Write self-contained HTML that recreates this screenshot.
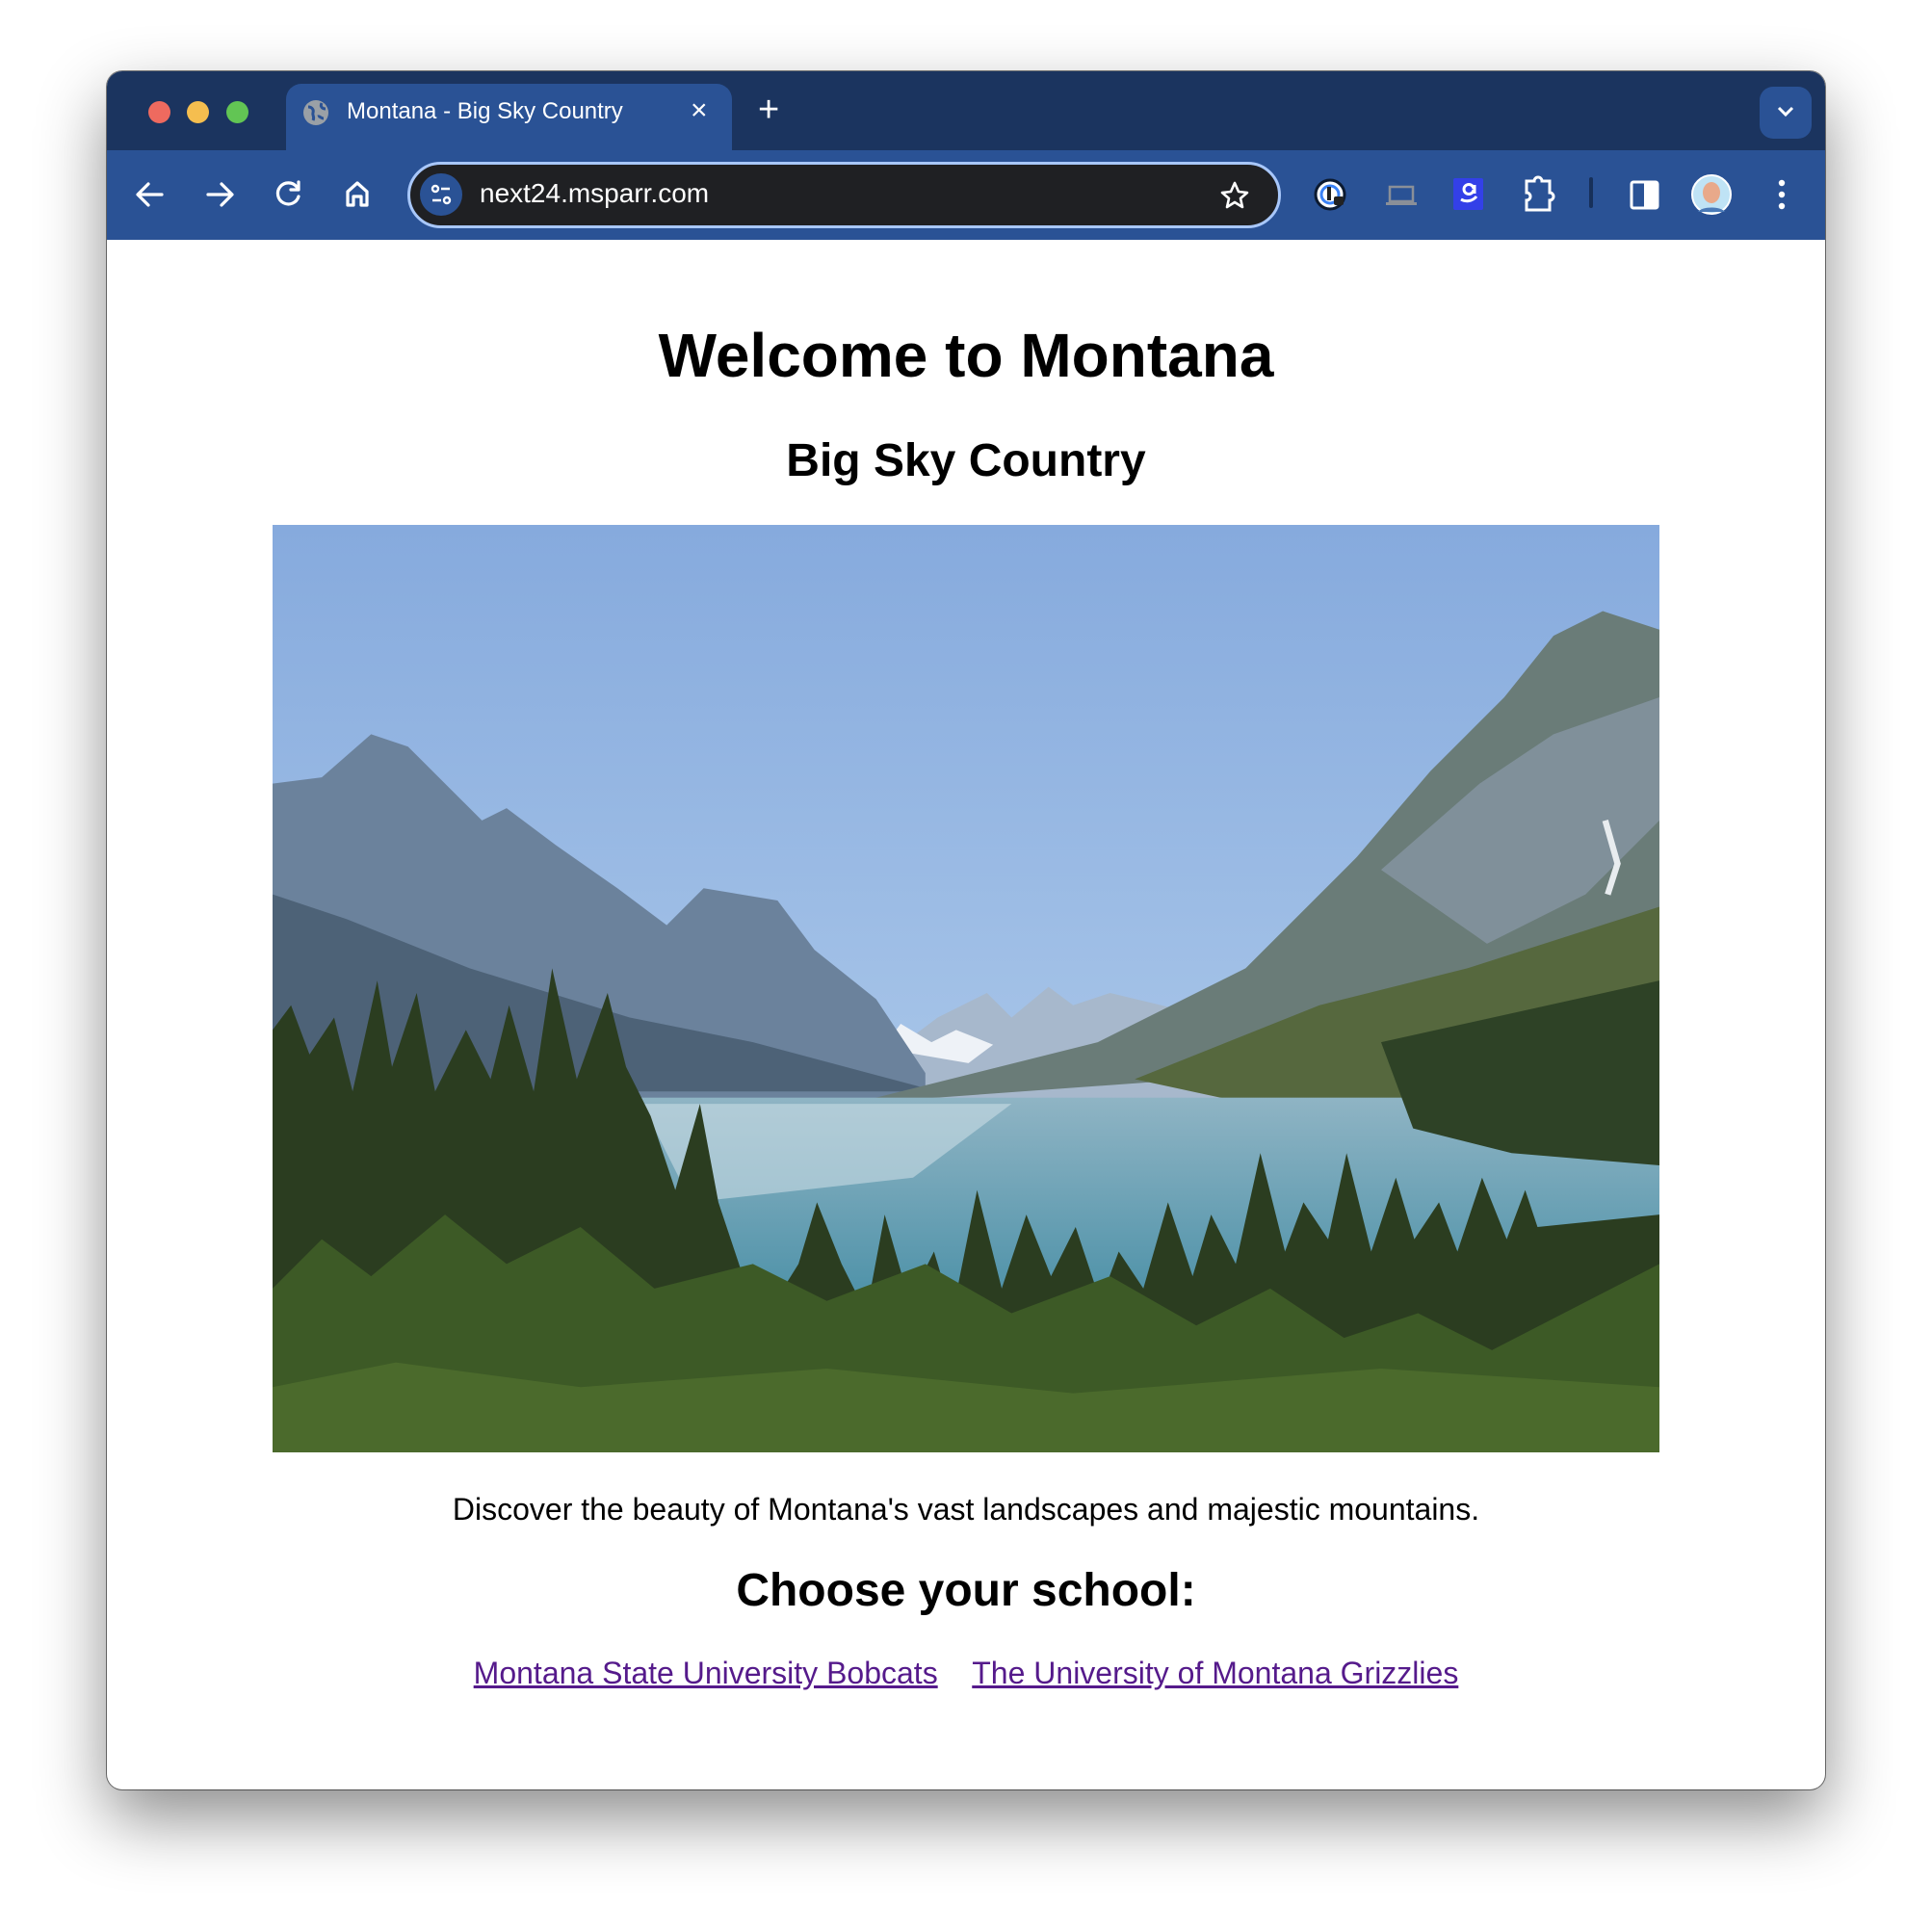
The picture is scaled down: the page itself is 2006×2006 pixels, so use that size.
<!DOCTYPE html>
<html><head><meta charset="utf-8">
<style>
*{margin:0;padding:0;box-sizing:border-box}
body{width:2006px;height:2006px;background:#fff;position:relative;overflow:hidden;font-family:"Liberation Sans",Arial,sans-serif}
.win{position:absolute;left:111px;top:74px;width:1784px;height:1784px;border-radius:16px;background:#fff;overflow:hidden;box-shadow:0 30px 70px rgba(0,0,0,.45),0 0 0 1px rgba(0,0,0,.5)}
.strip{position:absolute;left:0;top:0;width:100%;height:82px;background:#1b345f}
.tool{position:absolute;left:0;top:82px;width:100%;height:93px;background:#2a5295}
.dot{position:absolute;top:31px;width:23px;height:23px;border-radius:50%}
.tab{position:absolute;left:186px;top:13px;width:463px;height:70px;background:#2a5295;border-radius:16px 16px 0 0}
.t{position:absolute;color:#fff;white-space:nowrap}
.c{position:absolute;left:0;width:100%;text-align:center;color:#000;white-space:nowrap}
a{color:#551a8b}
</style></head><body>
<div class="win">
 <div class="strip"></div>
 <div class="tab"></div>
 <div class="dot" style="left:43px;background:#ee6a5f"></div>
 <div class="dot" style="left:83px;background:#f5be4f"></div>
 <div class="dot" style="left:124px;background:#62c554"></div>
 <svg style="position:absolute;left:203px;top:29px" width="28" height="28" viewBox="0 0 28 28"><circle cx="14" cy="14" r="13" fill="#9aa0a6"/><path d="M6 8c4 0 6 3 5 6s2 4 0 8M20 4c-2 4 1 6 4 6M22 20c-3 0-4-3-6-2" stroke="#2a5295" stroke-width="3" fill="none"/></svg>
 <div class="t" style="left:249px;top:28px;font-size:24px">Montana - Big Sky Country</div>
 <div class="t" style="left:606px;top:24px;font-size:30px">×</div>
 <div class="t" style="left:676px;top:19px;font-size:38px;font-weight:300">+</div>
 <div style="position:absolute;left:1716px;top:16px;width:54px;height:54px;border-radius:14px;background:#2a5295"></div>
 <svg style="position:absolute;left:1733px;top:34px" width="20" height="16"><path d="M3 4l7 7 7-7" stroke="#fff" stroke-width="3" fill="none"/></svg>
 <div class="tool"></div>
 <svg style="position:absolute;left:0;top:82px" width="1784" height="93" fill="none" stroke="#fff" stroke-width="3.2" stroke-linecap="round" stroke-linejoin="round">
  <path d="M33 46h24M43 35l-11 11 11 11"/>
  <path d="M105 46h24M119 35l11 11-11 11"/>
  <path d="M197 38a11 11 0 1 0 2 10M199 33v8h-8"/>
  <path d="M250 57V43l10-9 10 9v14h-6v-9h-8v9z"/>
 </svg>
 <div style="position:absolute;left:312px;top:94px;width:907px;height:69px;border-radius:35px;background:#1f2023;border:3px solid #a8c7fa"></div>
 <div style="position:absolute;left:325px;top:106px;width:44px;height:44px;border-radius:50%;background:#2a5295"></div>
 <svg style="position:absolute;left:325px;top:106px" width="44" height="44" fill="none" stroke="#fff" stroke-width="2.4"><circle cx="16" cy="16" r="3"/><path d="M22 16h9M13 28h9"/><circle cx="28" cy="28" r="3"/></svg>
 <div class="t" style="left:387px;top:111px;font-size:28px">next24.msparr.com</div>
 <svg style="position:absolute;left:1154px;top:112px" width="34" height="34"><path d="M17 4l4 9 9 1-7 6 2 9-8-5-8 5 2-9-7-6 9-1z" stroke="#fff" stroke-width="2.6" fill="none" stroke-linejoin="round"/></svg>
 <svg style="position:absolute;left:0;top:82px" width="1784" height="93">
  <circle cx="1270" cy="46" r="15" fill="#fff" stroke="#0c1a30" stroke-width="3"/><circle cx="1270" cy="46" r="9" fill="none" stroke="#3b82f6" stroke-width="3"/><rect x="1267" y="38" width="4" height="14" fill="#222"/><rect x="1274" y="48" width="10" height="9" rx="2" fill="#222"/>
  <rect x="1332" y="38" width="24" height="15" fill="none" stroke="#8a8f98" stroke-width="2.5"/><rect x="1328" y="54" width="32" height="3" fill="#8a8f98"/>
  <rect x="1398" y="29" width="31" height="33" rx="2" fill="#3340e8"/><path d="M1419 40a5 5 0 1 0 0 1M1420 36v9M1406 51c5 3 12 2 16-3" stroke="#fff" stroke-width="3" fill="none"/>
  <path d="M1474 32h8a4 4 0 0 1 8 0h8v12a4 4 0 0 1 0 8v10h-24v-10a4 4 0 0 0 0-8z" fill="none" stroke="#fff" stroke-width="3"/>
  <rect x="1539" y="28" width="4" height="32" rx="2" fill="#17305a"/>
  <rect x="1583" y="33" width="27" height="27" rx="2" fill="none" stroke="#fff" stroke-width="3"/><rect x="1596" y="33" width="14" height="27" fill="#fff"/>
  <circle cx="1666" cy="46" r="20" fill="#bfe3f5" stroke="#fff" stroke-width="2"/><ellipse cx="1666" cy="44" rx="9" ry="11" fill="#e8a98a"/><path d="M1652 64c4-6 24-6 28 0" fill="#4a7ab8"/>
  <circle cx="1739" cy="34" r="3.2" fill="#fff"/><circle cx="1739" cy="46" r="3.2" fill="#fff"/><circle cx="1739" cy="58" r="3.2" fill="#fff"/>
 </svg>
 <div class="c" style="top:258px;font-size:64px;font-weight:bold;line-height:74px">Welcome to Montana</div>
 <div class="c" style="top:377px;font-size:48px;font-weight:bold;line-height:56px">Big Sky Country</div>
 <svg style="position:absolute;left:172px;top:471px" width="1440" height="963" viewBox="0 0 1126 753" preserveAspectRatio="none">
  <defs>
   <linearGradient id="sky" x1="0" y1="0" x2="0" y2="1"><stop offset="0" stop-color="#86aadd"/><stop offset="1" stop-color="#bcd6f0"/></linearGradient>
   <linearGradient id="lake" x1="0" y1="0" x2="0" y2="1"><stop offset="0" stop-color="#8fb4c4"/><stop offset="1" stop-color="#3f8aa2"/></linearGradient>
  </defs>
  <rect width="1126" height="753" fill="url(#sky)"/>
  <path d="M480 470l20-40 40-30 40-20 20 20 30-25 20 15 30-10 50 12 60-10 60 10 30 10 0 70z" fill="#a7b8cc"/>
  <path d="M495 425l15-20 25 15 20-10 30 12-20 15z" fill="#eef2f7"/>
  <path d="M0 210l40-5 40-35 30 10 60 60 20-10 40 30 50 35 40 30 30-30 60 10 30 40 50 40 40 60 0 40H0z" fill="#6b829c"/>
  <path d="M0 300l60 20 100 40 130 40 100 20 150 40H0z" fill="#4d6277"/>
  <path d="M470 470l200-50 120-60 90-90 60-70 60-60 40-50 40-20 46 15v380l-150-10-160-10z" fill="#6a7c78"/>
  <path d="M900 280l80-70 60-40 86-30v100l-60 60-80 40z" fill="#80909a"/>
  <path d="M700 450l150-60 120-30 156-50v180l-240 0z" fill="#56683e"/>
  <path d="M1082 240l10 35-8 25" stroke="#e8ecef" stroke-width="5" fill="none"/>
  <rect x="0" y="465" width="1126" height="200" fill="url(#lake)"/>
  <path d="M300 470h300l-80 60-180 20z" fill="#c9dce4" opacity=".6"/>
  <path d="M900 420l226-50v150l-120-10-80-20z" fill="#2e4226"/>
  <path d="M0 753V410l15-20 15 40 20-30 15 60 20-90 12 70 20-60 15 80 25-50 20 40 15-60 20 70 15-100 20 90 25-70 15 60 20 40 20 60 20-70 15 80 20 60 20 30 25-40 15-50 20 50 20 40 15-80 20 70 20-40 15 50 20-100 20 80 20-60 20 50 20-40 20 60 15-40 20 30 20-70 20 60 15-50 20 40 20-90 20 80 15-40 20 30 15-70 20 80 20-60 15 50 20-30 15 40 20-60 20 50 15-40 10 30L1126 560V753z" fill="#2b3d20"/>
  <path d="M0 753V620l40-40 40 30 60-50 50 40 60-30 60 50 80-20 60 30 80-30 70 40 80-30 70 40 60-30 60 40 60-20 60 30L1126 600V753z" fill="#3d5a26"/>
  <path d="M0 753V700l100-20 150 20 200-15 200 20 250-20 226 15v53z" fill="#4b6a2c"/>
 </svg>
 <div class="c" style="top:1474px;font-size:32px;line-height:38px">Discover the beauty of Montana's vast landscapes and majestic mountains.</div>
 <div class="c" style="top:1550px;font-size:48px;font-weight:bold;line-height:56px">Choose your school:</div>
 <div class="c" style="top:1644px;font-size:32px;line-height:38px"><a href="#">Montana State University Bobcats</a>&nbsp;&nbsp;&nbsp;&nbsp;<a href="#">The University of Montana Grizzlies</a></div>
</div>
</body></html>
